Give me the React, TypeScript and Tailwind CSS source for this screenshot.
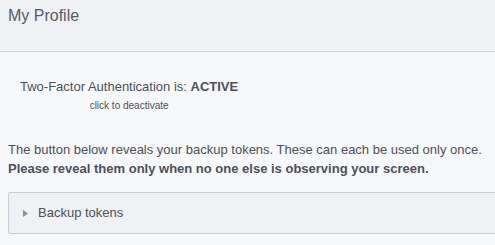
export default function App() {
  return (
    <div className="h-[245px] w-[495px] overflow-hidden bg-[#f7f8fa] font-['Liberation_Sans',Arial,sans-serif] text-[#4b505c]">
      <header className="h-[52px] border-b border-[#cdd0d9] bg-[#f0f1f5] px-2 pt-[4px]">
        <h1 className="text-[16px] leading-6 text-[#555a66]">My Profile</h1>
      </header>

      <section className="px-2">
        <div className="ml-3 mt-[25px] inline-flex flex-col items-center">
          <p className="text-[13px] leading-5">
            Two-Factor Authentication is: <strong className="font-bold">ACTIVE</strong>
          </p>
          <button className="mt-[2px] text-[10px] leading-[14px] text-[#4b505c]">click to deactivate</button>
        </div>

        <p className="mt-[27px] text-[13px] leading-[19px]">
          The button below reveals your backup tokens. These can each be used only once.
          <br />
          <strong className="font-bold">Please reveal them only when no one else is observing your screen.</strong>
        </p>

        <div className="mr-[-20px] mt-[14px] flex h-[42px] items-center gap-[10px] rounded-[2px] border border-[#cbced8] bg-[#f0f1f4] pl-[14px]">
          <svg width="5" height="7" viewBox="0 0 5 7" className="mt-[1px]">
            <path d="M0 0 L5 3.5 L0 7 Z" fill="#8a8e98" />
          </svg>
          <span className="text-[13px] leading-5 text-[#4b505c]">Backup tokens</span>
        </div>
      </section>
    </div>
  );
}
